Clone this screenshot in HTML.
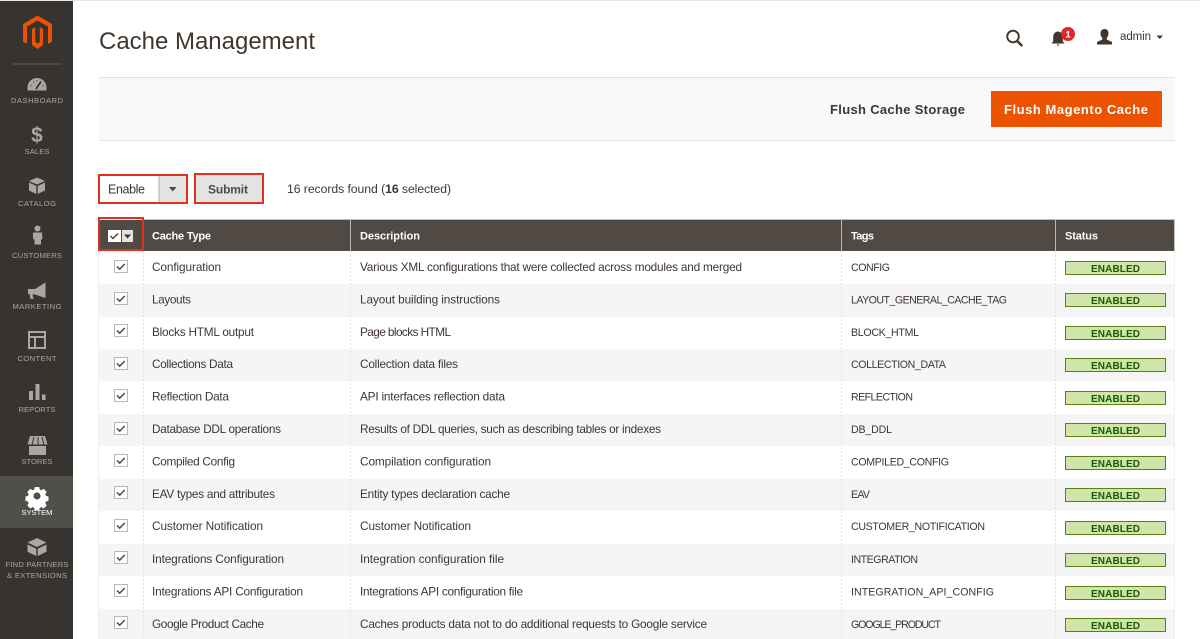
<!DOCTYPE html>
<html><head><meta charset="utf-8"><title>Cache Management</title>
<style>
html,body{margin:0;padding:0;width:1200px;height:639px;overflow:hidden;background:#fff}
svg{display:block;filter:blur(.3px)}
text{font-family:"Liberation Sans",sans-serif;fill:#41362f;font-size:11.8px}
.n{fill:#aaa6a0;font-size:7.6px;text-anchor:middle}
.h{fill:#fff;font-weight:bold;font-size:11px}
.e{fill:#185b00;font-weight:bold;font-size:10px}
.t{font-size:10.6px}
.ic{fill:#aaa6a0}
.d{stroke:#e2e2e2;stroke-dasharray:2 2;stroke-width:1;fill:none}
.c{fill:#fff;stroke:#b8b8b8}
.k{fill:none;stroke:#514943;stroke-width:1.5}
.b{fill:#d0e5a9;stroke:#5b8116}
.r{fill:none;stroke:#e0301e;stroke-width:2}
</style></head><body>
<svg width="1200" height="639" viewBox="0 0 1200 639" xmlns="http://www.w3.org/2000/svg">
<rect width="1200" height="639" fill="#fff"/>
<rect width="1200" height="1" fill="#e8e8e8"/>
<rect x="0" y="1" width="73" height="638" fill="#373330"/>
<rect x="0" y="476" width="73" height="52" fill="#514f4a"/>
<path fill="#eb5202" d="M37.5 15.500L52 24V41.500L48 44V26.500L37.500 20.500L27 26.500V44L23 41.500V24ZM32 29L35.200 27.300V42L37.500 43.500L39.800 42V27.300L43 29V45L37.500 49L32 45Z"/>
<rect x="12" y="63.500" width="50" height="1" fill="#5f5c58"/>

<path class="ic" d="M27.500 90.500v-3a9.500 9.500 0 0 1 19 0v3Z"/>
<path d="M36 89l5-7.500" stroke="#373330" stroke-width="1.800" fill="none"/>
<path d="M30.500 85.500l1 .5M33.500 81.500l.5 1M37 80v1M43.500 85.500l-1 .5" stroke="#373330" fill="none"/>
<text class="n" x="37" y="103" textLength="52" lengthAdjust="spacing">DASHBOARD</text>
<text x="37" y="142" text-anchor="middle" style="fill:#aaa6a0;font-size:21px;font-weight:bold">$</text>
<text class="n" x="37" y="154" textLength="25" lengthAdjust="spacing">SALES</text>
<path class="ic" d="M37 177.500l8 3.500-8 3.500-8-3.500ZM29 182.500l7.300 3.500V194l-7.300-3.500ZM45 182.500l-7.300 3.500V194l7.300-3.500Z"/>
<text class="n" x="37" y="206" textLength="38" lengthAdjust="spacing">CATALOG</text>
<circle class="ic" cx="37.500" cy="228.500" r="3"/>
<path class="ic" d="M33 232.500h9l.5 6-1.500 1.500v4.500h-6.500v-4.500l-1.500-1.500Z"/>
<text class="n" x="37" y="258" textLength="50" lengthAdjust="spacing">CUSTOMERS</text>
<path class="ic" d="M45.500 282.500V298L35 294.500h-2.500l1 4.500h-3l-1-5H28v-5h7Z"/>
<text class="n" x="37" y="309" textLength="49" lengthAdjust="spacing">MARKETING</text>
<path class="ic" fill-rule="evenodd" d="M28 331h18v18H28ZM30 333v3h14v-3ZM30 338v9h4v-9ZM36 338v9h8v-9Z"/>
<text class="n" x="37" y="361" textLength="39" lengthAdjust="spacing">CONTENT</text>
<path class="ic" d="M29 391h4v9h-4ZM35.500 384h4v16h-4ZM42 394.500h3.500v5.500H42Z"/>
<text class="n" x="37" y="412" textLength="37" lengthAdjust="spacing">REPORTS</text>
<path class="ic" d="M30 436h15l2.500 8.500H27.500ZM29 446h17v9H29Z"/>
<path stroke="#373330" fill="none" d="M34 437l-2 8M38 437v8M42 437l2 8"/>
<text class="n" x="37" y="464" textLength="31" lengthAdjust="spacing">STORES</text>
<path fill="#fff" fill-rule="evenodd" d="M34.800 487h4.400l.6 2.600 1.600.7 2.300-1.400 3 3.100-1.400 2.200.7 1.700 2.500.6v4.400l-2.500.6-.7 1.700 1.400 2.200-3 3.100-2.300-1.400-1.600.7-.6 2.600h-4.400l-.6-2.600-1.600-.7-2.300 1.400-3-3.100 1.400-2.200-.7-1.700-2.500-.6v-4.400l2.500-.6.700-1.700-1.400-2.200 3-3.100 2.300 1.400 1.600-.7ZM37 492.500a3.500 3.500 0 1 0 .01 0Z"/>
<text class="n" x="37" y="515" textLength="31" lengthAdjust="spacing" style="fill:#fff">SYSTEM</text>
<path class="ic" d="M37 538l9.500 4.500-9.500 4.500-9.500-4.500ZM27.500 544.500l8.800 4.200V556l-8.800-4.200ZM46.500 544.500l-8.800 4.200V556l8.800-4.200Z"/>
<text class="n" x="37" y="567" textLength="63" lengthAdjust="spacing">FIND PARTNERS</text>
<text class="n" x="37" y="578" textLength="60" lengthAdjust="spacing">&amp; EXTENSIONS</text>

<text x="99" y="49" textLength="216" lengthAdjust="spacing" style="font-size:24px;fill:#41362f">Cache Management</text>
<circle cx="1013" cy="36.500" r="5.800" fill="none" stroke="#41362f" stroke-width="1.900"/>
<path d="M1017.200 41l5 5" stroke="#41362f" stroke-width="2.400" fill="none"/>
<path fill="#41362f" d="M1058 31.500a5 5 0 0 1 4.800 5v5l1.800 2h-13.200l1.800-2v-5a5 5 0 0 1 4.800-5ZM1056.500 44.500h3l-1.500 1.500Z"/>
<circle cx="1068" cy="34" r="7" fill="#e22626"/>
<text x="1068" y="37.500" text-anchor="middle" style="fill:#fff;font-size:9.500px;font-weight:bold">1</text>
<path fill="#41362f" d="M1104.500 29c2.800 0 4 2 4 4.500 0 2-.8 3.500-1.800 4.500v1.500l5.300 2.500v2.500h-15v-2.500l5.300-2.500V38c-1-1-1.800-2.500-1.800-4.500 0-2.500 1.200-4.500 4-4.500Z"/>
<text x="1120" y="40" textLength="31" lengthAdjust="spacing" style="font-size:11.500px">admin</text>
<path fill="#41362f" d="M1156.500 35.500h6.500l-3.250 3.500Z"/>

<rect x="99" y="78" width="1076" height="62" fill="#f8f8f8"/>
<path d="M99 77.500h1076M99 140.500h1076" stroke="#e3e3e3"/>
<text x="830" y="114" textLength="135" lengthAdjust="spacing" style="font-weight:bold;font-size:13px">Flush Cache Storage</text>
<rect x="991" y="91" width="171" height="36" fill="#eb5202"/>
<text x="1004" y="114" textLength="144" lengthAdjust="spacing" style="font-weight:bold;font-size:13px;fill:#fff">Flush Magento Cache</text>

<rect x="99" y="175" width="88" height="28" fill="#fff"/>
<rect x="159" y="175" width="28" height="28" fill="#e3e3e3"/>
<path d="M159 175v28" stroke="#adadad"/>
<path fill="#514943" d="M169 187h7.500l-3.750 4.500Z"/>
<rect class="r" x="99" y="175" width="88" height="28"/>
<text x="108" y="193.500" textLength="37" lengthAdjust="spacing" style="font-size:12.500px">Enable</text>
<rect x="195" y="174" width="68" height="29" fill="#e3e3e3"/>
<rect class="r" x="195" y="174" width="68" height="29"/>
<text x="208" y="193.500" textLength="40" lengthAdjust="spacing" style="font-weight:bold;font-size:12px;fill:#514943">Submit</text>
<text x="287" y="193" textLength="164" lengthAdjust="spacing" style="font-size:12.200px">16 records found (<tspan font-weight="bold">16</tspan> selected)</text>

<rect x="99" y="220" width="1075" height="31" fill="#514943"/>
<path d="M350.500 220v31M841.500 220v31M1055.500 220v31" stroke="#b8b4b0"/>
<path d="M143 219.500h1031.500v31.500" stroke="#c4c2bf" fill="none"/>
<rect x="108" y="230" width="13" height="12" fill="#fff"/>
<rect x="122" y="230" width="11" height="12" fill="#e3e3e3"/>
<path class="k" d="M110.500 236l2.500 2.500 5-5"/>
<path fill="#373330" d="M124 234.500h7l-3.500 4Z"/>
<rect class="r" x="99" y="218" width="44" height="32"/>
<text class="h" x="152" y="239.500" textLength="59" lengthAdjust="spacing">Cache Type</text>
<text class="h" x="360" y="239.500" textLength="60" lengthAdjust="spacing">Description</text>
<text class="h" x="851" y="239.500" textLength="23" lengthAdjust="spacing">Tags</text>
<text class="h" x="1065" y="239.500" textLength="33" lengthAdjust="spacing">Status</text>

<g fill="#f5f5f5">
<rect x="99" y="284" width="1075" height="33"/>
<rect x="99" y="349" width="1075" height="32"/>
<rect x="99" y="414" width="1075" height="32"/>
<rect x="99" y="479" width="1075" height="32"/>
<rect x="99" y="544" width="1075" height="32"/>
<rect x="99" y="609" width="1075" height="30"/>
</g>
<path class="d" d="M143.500 251v388M350.500 251v388M841.500 251v388M1055.500 251v388"/>
<path d="M1174.500 251v388M98.500 251v388" stroke="#f0f0f0"/>

<g id="checks">
<rect class="c" x="114.500" y="260.500" width="13" height="12"/><path class="k" d="M117 266.500l2.700 2.700 5-5.200"/>
<rect class="c" x="114.500" y="292.500" width="13" height="12"/><path class="k" d="M117 298.500l2.700 2.700 5-5.200"/>
<rect class="c" x="114.500" y="324.500" width="13" height="12"/><path class="k" d="M117 330.500l2.700 2.700 5-5.200"/>
<rect class="c" x="114.500" y="357.500" width="13" height="12"/><path class="k" d="M117 363.500l2.700 2.700 5-5.200"/>
<rect class="c" x="114.500" y="389.500" width="13" height="12"/><path class="k" d="M117 395.500l2.700 2.700 5-5.200"/>
<rect class="c" x="114.500" y="422.500" width="13" height="12"/><path class="k" d="M117 428.500l2.700 2.700 5-5.200"/>
<rect class="c" x="114.500" y="454.500" width="13" height="12"/><path class="k" d="M117 460.500l2.700 2.700 5-5.200"/>
<rect class="c" x="114.500" y="486.500" width="13" height="12"/><path class="k" d="M117 492.500l2.700 2.700 5-5.200"/>
<rect class="c" x="114.500" y="519.500" width="13" height="12"/><path class="k" d="M117 525.500l2.700 2.700 5-5.200"/>
<rect class="c" x="114.500" y="551.500" width="13" height="12"/><path class="k" d="M117 557.500l2.700 2.700 5-5.200"/>
<rect class="c" x="114.500" y="584.500" width="13" height="12"/><path class="k" d="M117 590.500l2.700 2.700 5-5.200"/>
<rect class="c" x="114.500" y="616.500" width="13" height="12"/><path class="k" d="M117 622.500l2.700 2.700 5-5.200"/>
</g>

<text x="152" y="271" textLength="69" lengthAdjust="spacing">Configuration</text>
<text x="360" y="271" textLength="382" lengthAdjust="spacing">Various XML configurations that were collected across modules and merged</text>
<text class="t" x="851" y="271" textLength="39" lengthAdjust="spacing">CONFIG</text>
<rect class="b" x="1065.500" y="261.500" width="100" height="13"/><text class="e" x="1091" y="272" textLength="49" lengthAdjust="spacing">ENABLED</text>

<text x="152" y="303.500" textLength="39" lengthAdjust="spacing">Layouts</text>
<text x="360" y="303.500" textLength="140" lengthAdjust="spacing">Layout building instructions</text>
<text class="t" x="851" y="303.500" textLength="156" lengthAdjust="spacing">LAYOUT_GENERAL_CACHE_TAG</text>
<rect class="b" x="1065.500" y="293.500" width="100" height="13"/><text class="e" x="1091" y="304" textLength="49" lengthAdjust="spacing">ENABLED</text>

<text x="152" y="336" textLength="102" lengthAdjust="spacing">Blocks HTML output</text>
<text x="360" y="336" textLength="91" lengthAdjust="spacing">Page blocks HTML</text>
<text class="t" x="851" y="336" textLength="68" lengthAdjust="spacing">BLOCK_HTML</text>
<rect class="b" x="1065.500" y="326.500" width="100" height="13"/><text class="e" x="1091" y="337" textLength="49" lengthAdjust="spacing">ENABLED</text>

<text x="152" y="368" textLength="81" lengthAdjust="spacing">Collections Data</text>
<text x="360" y="368" textLength="98" lengthAdjust="spacing">Collection data files</text>
<text class="t" x="851" y="368" textLength="95" lengthAdjust="spacing">COLLECTION_DATA</text>
<rect class="b" x="1065.500" y="358.500" width="100" height="13"/><text class="e" x="1091" y="369" textLength="49" lengthAdjust="spacing">ENABLED</text>

<text x="152" y="400.500" textLength="77" lengthAdjust="spacing">Reflection Data</text>
<text x="360" y="400.500" textLength="145" lengthAdjust="spacing">API interfaces reflection data</text>
<text class="t" x="851" y="400.500" textLength="62" lengthAdjust="spacing">REFLECTION</text>
<rect class="b" x="1065.500" y="391.500" width="100" height="13"/><text class="e" x="1091" y="402" textLength="49" lengthAdjust="spacing">ENABLED</text>

<text x="152" y="433" textLength="129" lengthAdjust="spacing">Database DDL operations</text>
<text x="360" y="433" textLength="301" lengthAdjust="spacing">Results of DDL queries, such as describing tables or indexes</text>
<text class="t" x="851" y="433" textLength="41" lengthAdjust="spacing">DB_DDL</text>
<rect class="b" x="1065.500" y="423.500" width="100" height="13"/><text class="e" x="1091" y="434" textLength="49" lengthAdjust="spacing">ENABLED</text>

<text x="152" y="465.500" textLength="83" lengthAdjust="spacing">Compiled Config</text>
<text x="360" y="465.500" textLength="131" lengthAdjust="spacing">Compilation configuration</text>
<text class="t" x="851" y="465.500" textLength="98" lengthAdjust="spacing">COMPILED_CONFIG</text>
<rect class="b" x="1065.500" y="456.500" width="100" height="13"/><text class="e" x="1091" y="467" textLength="49" lengthAdjust="spacing">ENABLED</text>

<text x="152" y="498" textLength="123" lengthAdjust="spacing">EAV types and attributes</text>
<text x="360" y="498" textLength="150" lengthAdjust="spacing">Entity types declaration cache</text>
<text class="t" x="851" y="498" textLength="19" lengthAdjust="spacing">EAV</text>
<rect class="b" x="1065.500" y="488.500" width="100" height="13"/><text class="e" x="1091" y="499" textLength="49" lengthAdjust="spacing">ENABLED</text>

<text x="152" y="530" textLength="111" lengthAdjust="spacing">Customer Notification</text>
<text x="360" y="530" textLength="111" lengthAdjust="spacing">Customer Notification</text>
<text class="t" x="851" y="530" textLength="134" lengthAdjust="spacing">CUSTOMER_NOTIFICATION</text>
<rect class="b" x="1065.500" y="521.500" width="100" height="13"/><text class="e" x="1091" y="532" textLength="49" lengthAdjust="spacing">ENABLED</text>

<text x="152" y="563" textLength="132" lengthAdjust="spacing">Integrations Configuration</text>
<text x="360" y="563" textLength="144" lengthAdjust="spacing">Integration configuration file</text>
<text class="t" x="851" y="563" textLength="67" lengthAdjust="spacing">INTEGRATION</text>
<rect class="b" x="1065.500" y="553.500" width="100" height="13"/><text class="e" x="1091" y="564" textLength="49" lengthAdjust="spacing">ENABLED</text>

<text x="152" y="595.500" textLength="151" lengthAdjust="spacing">Integrations API Configuration</text>
<text x="360" y="595.500" textLength="163" lengthAdjust="spacing">Integrations API configuration file</text>
<text class="t" x="851" y="595.500" textLength="143" lengthAdjust="spacing">INTEGRATION_API_CONFIG</text>
<rect class="b" x="1065.500" y="586.500" width="100" height="13"/><text class="e" x="1091" y="597" textLength="49" lengthAdjust="spacing">ENABLED</text>

<text x="152" y="628" textLength="112" lengthAdjust="spacing">Google Product Cache</text>
<text x="360" y="628" textLength="347" lengthAdjust="spacing">Caches products data not to do additional requests to Google service</text>
<text class="t" x="851" y="628" textLength="90" lengthAdjust="spacing">GOOGLE_PRODUCT</text>
<rect class="b" x="1065.500" y="618.500" width="100" height="13"/><text class="e" x="1091" y="629" textLength="49" lengthAdjust="spacing">ENABLED</text>
</svg>
</body></html>
